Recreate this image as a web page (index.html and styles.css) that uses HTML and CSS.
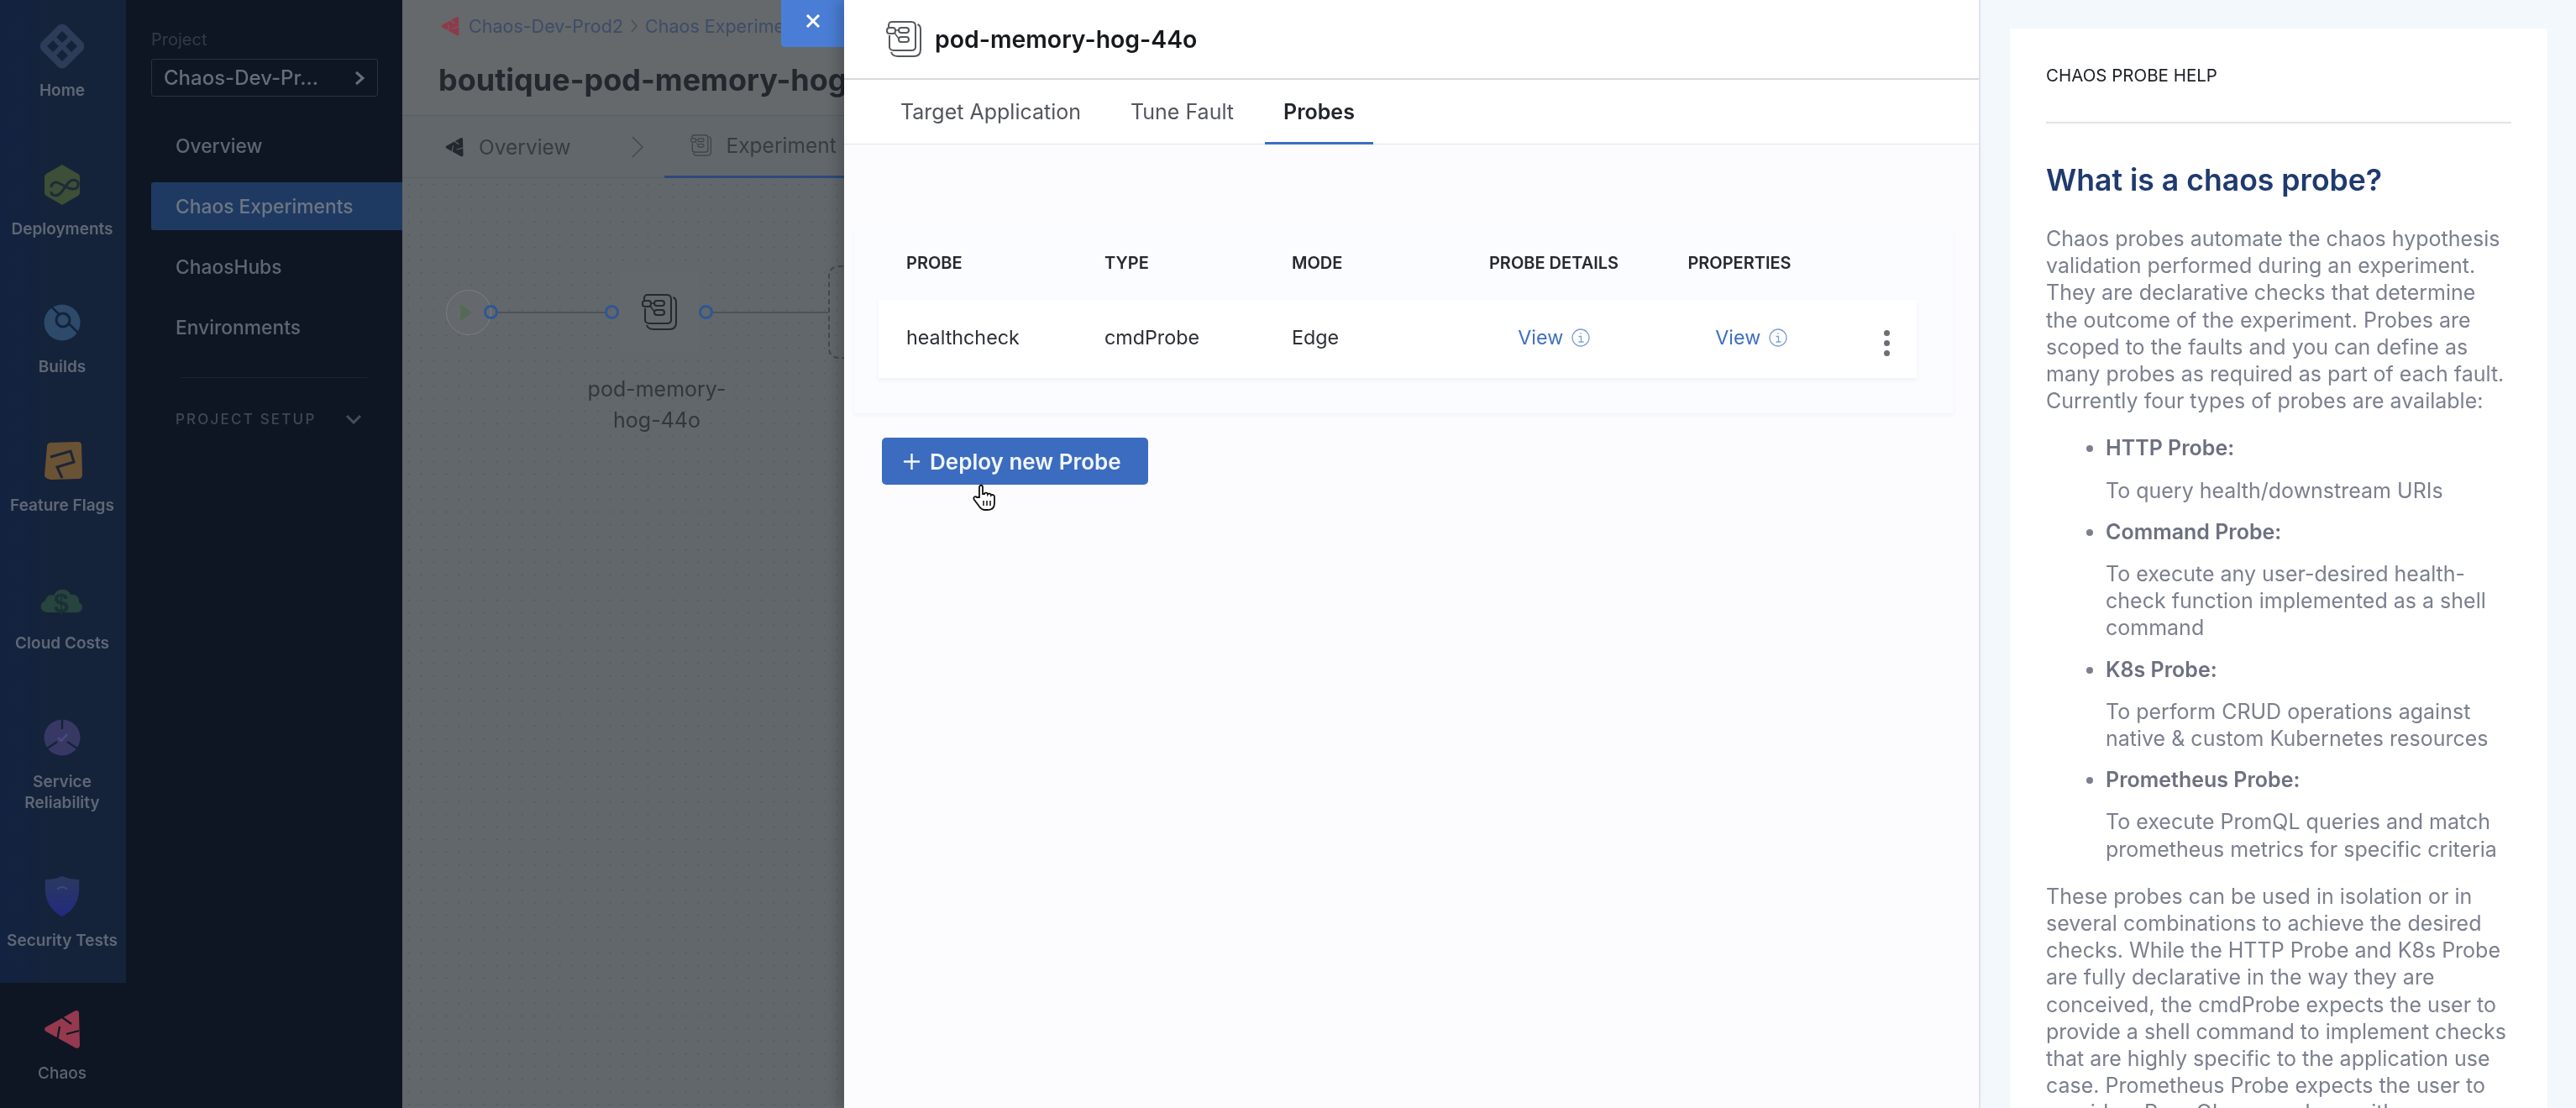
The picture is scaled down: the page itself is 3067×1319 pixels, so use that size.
FILE: index.html
```html
<!DOCTYPE html>
<html lang="en">

<head>
  <meta charset="UTF-8">
  <title>pod-memory-hog-44o</title>
  <link rel="stylesheet" href="styles.css">
</head>

<body>
  <svg class="defs" width="0" height="0">
    <symbol id="step" viewBox="0 0 42 43">
      <path d="M3 7V5c0-2.500 2-4 4-4h23c3 0 5 2 5 5v25c0 3-2 4-5 4H9c-3 0-5-2-5-4V17" fill="none" stroke="currentColor" stroke-width="2" />
      <path d="M37.500 4c2.500 1 3.500 3 3.500 6v24c0 5-3 8-8 8H14c-4 0-7-2-8-5" fill="none" stroke="currentColor" stroke-width="2" />
      <rect x="1" y="8" width="10" height="7" rx="3" fill="none" stroke="currentColor" stroke-width="2" />
      <rect x="15" y="8" width="12" height="6" rx="3" fill="none" stroke="currentColor" stroke-width="2" />
      <rect x="15" y="19" width="12" height="6" rx="3" fill="none" stroke="currentColor" stroke-width="2" />
      <path d="M11 11h4M10 14l5 7" fill="none" stroke="currentColor" stroke-width="1.500" />
    </symbol>
    <symbol id="chaos" viewBox="0 0 44 46">
      <path d="M37 1.500c3-1.500 5 0 5 2.500l1 38c0 3-2 4.500-5 3.500L3 26c-2.500-1.500-2.500-4 0-5.500z" fill="currentColor" />
      <path d="M22 9l11 8M19 20l-3 17M27 29l15-4" fill="none" stroke="var(--crack)" stroke-width="2.200" />
    </symbol>
  </svg>

  <nav class="nav">
    <div class="nav-list">
      <a class="nav-item">
        <svg class="nav-icon" viewBox="0 0 54 54">
          <path d="M22 2.500c3-2.500 7-2.500 10 0l19 19c3 3 3 8 0 11L32 51.500c-3 2.500-7 2.500-10 0L3 32.500c-3-3-3-8 0-11z" fill="#2c3c59" />
          <path d="M27 9l7 7-7 7-7-7zM38 20l7 7-7 7-7-7zM16 20l7 7-7 7-7-7zM27 31l7 7-7 7-7-7z" fill="#14233a" />
        </svg>
        <span>Home</span>
      </a>
      <a class="nav-item">
        <svg class="nav-icon" viewBox="0 0 54 54">
          <path d="M27 3l19 11c1 1 2 2 2 3v20c0 1-1 2-2 3L27 51 8 40c-1-1-2-2-2-3V17c0-1 1-2 2-3z" fill="#3d4f37" />
          <path d="M14 35c0 6 8 6 12 1l8-11c5-6 13-4 12 2 0 6-8 6-13 3l-10-5c-5-3-9 1-9 5" fill="none" stroke="#1c2c38" stroke-width="3" />
        </svg>
        <span>Deployments</span>
      </a>
      <a class="nav-item">
        <svg class="nav-icon" viewBox="0 0 54 54">
          <circle cx="27" cy="27" r="21.500" fill="#2d4a6b" />
          <path d="M14 8l34 33" stroke="#14233a" stroke-width="2.500" />
          <circle cx="28" cy="24" r="8" fill="#2d4a6b" stroke="#14233a" stroke-width="3" />
        </svg>
        <span>Builds</span>
      </a>
      <a class="nav-item">
        <svg class="nav-icon" viewBox="0 0 54 54">
          <path d="M10 5l36-1c3 0 4 2 4 4l1 35c0 3-2 5-5 5l-31 1c-3 0-9-2-9-5l3-35c0-2 2-4 4-4z" fill="#6a5234" />
          <path d="M13 22l24-7 4 13-20 6 6 13" fill="none" stroke="#1d2634" stroke-width="3" />
        </svg>
        <span>Feature Flags</span>
      </a>
      <a class="nav-item">
        <svg class="nav-icon" viewBox="0 0 54 54">
          <path d="M10 43C0 43-1 32 7 29c1-6 6-8 10-6 3-9 17-10 20-1 7-1 11 4 10 9 6 3 5 12-3 12z" fill="#27443f" />
          <text class="dollar" x="26" y="43">$</text>
        </svg>
        <span>Cloud Costs</span>
      </a>
      <a class="nav-item">
        <svg class="nav-icon" viewBox="0 0 54 54">
          <circle cx="27" cy="27" r="21.500" fill="#383865" />
          <path d="M27 4v13M9 40l12-8M45 40l-12-8" stroke="#14233a" stroke-width="2.500" />
          <path d="M22 27l4 4 7-8" fill="none" stroke="#4b4a80" stroke-width="2.500" />
        </svg>
        <span>Service<br>Reliability</span>
      </a>
      <a class="nav-item">
        <svg class="nav-icon" viewBox="0 0 54 54">
          <defs>
            <linearGradient id="shield" x1="0" y1="0" x2="0" y2="1">
              <stop offset="0" stop-color="#293a5e" />
              <stop offset="1" stop-color="#222a80" />
            </linearGradient>
          </defs>
          <path d="M27 3c7 3 13 4 20 4 1 18 0 33-20 44C7 40 6 25 7 7c7 0 13-1 20-4z" fill="url(#shield)" />
          <path d="M21 19c3-4 9-4 12 0" fill="none" stroke="#3a4a70" stroke-width="2" />
        </svg>
        <span>Security Tests</span>
      </a>
    </div>
    <a class="nav-item nav-chaos">
      <svg class="nav-icon chaos-logo">
        <use href="#chaos" />
      </svg>
      <span>Chaos</span>
    </a>
  </nav>

  <aside class="subnav">
    <div class="project-label">Project</div>
    <div class="project-box">
      <span>Chaos-Dev-Pr...</span>
      <svg class="chev" viewBox="0 0 14 18">
        <path d="M3 2l8 7-8 7" />
      </svg>
    </div>
    <ul class="subnav-list">
      <li>Overview</li>
      <li class="active">Chaos Experiments</li>
      <li>ChaosHubs</li>
      <li>Environments</li>
    </ul>
    <div class="subnav-divider"></div>
    <div class="setup">
      <span>PROJECT SETUP</span>
      <svg class="chev setup-chev" viewBox="0 0 20 12">
        <path d="M2 2l8 8 8-8" />
      </svg>
    </div>
  </aside>

  <main class="main">
    <header class="main-head">
      <div class="crumbs">
        <svg class="crumb-logo">
          <use href="#chaos" />
        </svg>
        <span>Chaos-Dev-Prod2</span>
        <svg class="crumb-sep" viewBox="0 0 10 16">
          <path d="M2 1l6 7-6 7" />
        </svg>
        <span>Chaos Experiments</span>
      </div>
      <h1>boutique-pod-memory-hog</h1>
    </header>
    <div class="main-tabs">
      <div class="main-tab">
        <svg class="tab-logo">
          <use href="#chaos" />
        </svg>
        <span>Overview</span>
      </div>
      <svg class="tab-sep" viewBox="0 0 16 28">
        <path d="M2 2l12 12L2 26" />
      </svg>
      <div class="main-tab current">
        <svg class="tab-step">
          <use href="#step" />
        </svg>
        <span>Experiment</span>
      </div>
    </div>
    <div class="canvas">
      <div class="pipeline">
        <div class="start"><i></i></div>
        <div class="port first"></div>
        <div class="wire"></div>
        <div class="port"></div>
        <div class="node">
          <svg class="node-icon">
            <use href="#step" />
          </svg>
        </div>
        <div class="port"></div>
        <div class="wire long"></div>
        <div class="group"></div>
      </div>
      <div class="node-label">pod-memory-<br>hog-44o</div>
    </div>
    <button class="close-btn">
      <svg viewBox="0 0 18 18">
        <path d="M2 2l14 14M16 2L2 16" />
      </svg>
    </button>
  </main>

  <section class="drawer">
    <div class="drawer-head">
      <svg class="drawer-icon">
        <use href="#step" />
      </svg>
      <h2>pod-memory-hog-44o</h2>
    </div>
    <div class="drawer-tabs">
      <a>Target Application</a>
      <a>Tune Fault</a>
      <a class="on">Probes</a>
    </div>
    <div class="drawer-body">
      <div class="probe-card">
        <div class="probe-row probe-headers">
          <div>PROBE</div>
          <div>TYPE</div>
          <div>MODE</div>
          <div class="center">PROBE DETAILS</div>
          <div class="center">PROPERTIES</div>
          <div></div>
        </div>
        <div class="probe-row probe-item">
          <div>healthcheck</div>
          <div>cmdProbe</div>
          <div>Edge</div>
          <div class="center"><a class="view">View <svg class="info" viewBox="0 0 22 22">
                <circle cx="11" cy="11" r="10" />
                <path d="M8.500 9.500H11.500V16M8.500 16h6M11 5v1.500" />
              </svg></a></div>
          <div class="center"><a class="view view-props">View <svg class="info" viewBox="0 0 22 22">
                <circle cx="11" cy="11" r="10" />
                <path d="M8.500 9.500H11.500V16M8.500 16h6M11 5v1.500" />
              </svg></a></div>
          <div class="dots"><i></i><i></i><i></i></div>
        </div>
      </div>
      <div class="deploy-wrap">
        <button class="deploy-btn">
          <svg viewBox="0 0 22 22">
            <path d="M11 1v20M1 11h20" />
          </svg>
          Deploy new Probe
        </button>
        <!-- mouse pointer from the recording -->
        <svg class="pointer" viewBox="0 0 28 32">
          <path d="M8 16V4c0-3 4-3 4 0v8l2 0c0-2 4-2 4 0.500c1-1.500 4-1 4 1 1-1 4-.500 4 2V23c0 5-3 8-8 8h-3c-3 0-5-1-7-4l-6-8c-2-3 1-5 3-3z" fill="#fff" stroke="#111" stroke-width="1.800" />
          <path d="M13 20v6M17 20v6M21 20v6" stroke="#111" stroke-width="1.500" />
        </svg>
      </div>
    </div>
  </section>

  <aside class="help">
    <div class="help-card">
      <div class="help-title">CHAOS PROBE HELP</div>
      <h3>What is a chaos probe?</h3>
      <p>Chaos probes automate the chaos hypothesis validation performed during an experiment. They are declarative checks that determine the outcome of the experiment. Probes are scoped to the faults and you can define as many probes as required as part of each fault. Currently four types of probes are available:</p>
      <ul>
        <li><strong>HTTP Probe:</strong>
          <p>To query health/downstream URIs</p>
        </li>
        <li><strong>Command Probe:</strong>
          <p>To execute any user-desired health-check function implemented as a shell command</p>
        </li>
        <li><strong>K8s Probe:</strong>
          <p>To perform CRUD operations against native &amp; custom Kubernetes resources</p>
        </li>
        <li><strong>Prometheus Probe:</strong>
          <p>To execute PromQL queries and match prometheus metrics for specific criteria</p>
        </li>
      </ul>
      <p>These probes can be used in isolation or in several combinations to achieve the desired checks. While the HTTP Probe and K8s Probe are fully declarative in the way they are conceived, the cmdProbe expects the user to provide a shell command to implement checks that are highly specific to the application use case. Prometheus Probe expects the user to provide a PromQL query along with</p>
    </div>
  </aside>
</body>

</html>
```

FILE: styles.css
```css
* {
  padding: 0;
  margin: 0;
  box-sizing: border-box;
}

html,
body {
  height: 100%;
  overflow: hidden;
}

body {
  display: flex;
  font-family: Inter, "Noto Sans", sans-serif;
  background-color: #0f1623;
}

ul {
  list-style: none;
}

.defs {
  position: absolute;
}

/* left module nav */
.nav {
  flex: none;
  width: 150px;
  height: 1319px;
  display: flex;
  flex-direction: column;
  background-color: #0f1623;
  filter: blur(0.6px);
}

.nav-list {
  height: 1170px;
  background: linear-gradient(90deg, #122241, #15233a 40%, #15233a);
}

.nav-item {
  display: flex;
  flex-direction: column;
  align-items: center;
  gap: 13px;
  padding: 28px 2px 44.500px 0;
  font-size: 19px;
  font-weight: 600;
  line-height: 25px;
  text-align: center;
  white-space: nowrap;
  color: #5f6775;
}

.nav-icon {
  width: 54px;
  height: 54px;
}

.dollar {
  font-family: "Liberation Sans", sans-serif;
  font-size: 32px;
  text-anchor: middle;
  fill: #1a3034;
}

.nav-chaos {
  padding: 28px 2px 0 0;
  color: #5e6674;
  font-weight: 500;
}

.chaos-logo {
  width: 44px;
  height: 46px;
  margin: 4px 0;
  color: #95394f;
  --crack: #0f1623;
}

/* project nav */
.subnav {
  flex: none;
  width: 329px;
  height: 1319px;
  padding: 35px 0 0 30px;
  background-color: #0f1623;
  color: #5f6673;
  filter: blur(0.6px);
}

.project-label {
  font-size: 20px;
  line-height: 24px;
  color: #333a47;
}

.project-box {
  display: flex;
  align-items: center;
  justify-content: space-between;
  width: 270px;
  height: 45px;
  margin-top: 11px;
  padding: 0 14px;
  border: 1px solid #2a3140;
  border-radius: 3px;
  font-size: 24px;
  font-weight: 500;
  color: #666d7a;
}

.chev {
  flex: none;
  width: 14px;
  height: 18px;
  fill: none;
  stroke: #666d7a;
  stroke-width: 3;
}

.subnav-list {
  margin-top: 30px;
}

.subnav-list li {
  height: 57px;
  margin-bottom: 15px;
  padding-left: 29px;
  font-size: 22.800px;
  font-weight: 500;
  line-height: 57px;
}

.subnav-list .active {
  background-color: #1f3a62;
  border-radius: 3px 0 0 3px;
  color: #6d7684;
}

.subnav-divider {
  width: 222px;
  margin: 31px 0 0 35px;
  border-top: 1px solid #1b2230;
}

.setup {
  display: flex;
  align-items: center;
  justify-content: space-between;
  width: 222px;
  margin: 36px 0 0 29px;
  font-size: 17px;
  font-weight: 500;
  letter-spacing: 2.200px;
  line-height: 26px;
  color: #3f4756;
}

.setup-chev {
  width: 20px;
  height: 12px;
  stroke: #454d5c;
}

/* dimmed experiment page */
.main {
  flex: none;
  position: relative;
  width: 526px;
  height: 1319px;
  overflow: hidden;
  background-color: #62676b;
  filter: blur(0.6px);
}

.main-head {
  height: 138px;
  padding: 16px 0 0 43px;
  border-bottom: 1px solid #585d61;
  background-color: #65696b;
}

.crumbs {
  display: flex;
  align-items: center;
  height: 30px;
  font-size: 21.500px;
  white-space: nowrap;
  color: #3d4c68;
}

.crumb-logo {
  width: 22px;
  height: 30px;
  margin: 0 11px 0 3px;
  color: #8f3a4c;
  --crack: #65696b;
}

.crumb-sep {
  width: 10px;
  height: 16px;
  margin: 0 8px;
  fill: none;
  stroke: #4a4f56;
  stroke-width: 1.500;
}

h1 {
  margin-top: 27px;
  font-size: 36px;
  font-weight: 700;
  line-height: 44px;
  white-space: nowrap;
  color: #23272e;
}

.main-tabs {
  display: flex;
  align-items: center;
  height: 74px;
  padding-left: 51px;
  border-bottom: 1px solid #585d61;
  font-size: 24.500px;
  white-space: nowrap;
  color: #373c43;
}

.main-tab {
  display: flex;
  align-items: center;
  gap: 18px;
  height: 74px;
}

.main-tab.current {
  flex: none;
  width: 240px;
  padding-left: 31px;
  border-bottom: 3px solid #2b4a7c;
}

.tab-logo {
  width: 22px;
  height: 30px;
  color: #23272e;
  --crack: #62676b;
}

.tab-step {
  width: 25px;
  height: 28px;
  color: #3c4148;
}

.tab-sep {
  flex: none;
  width: 16px;
  height: 28px;
  margin: 0 0 0 71px;
  margin-right: 24px;
  fill: none;
  stroke: #45494f;
  stroke-width: 1.500;
}

.canvas {
  height: 1107px;
  padding: 104px 0 0 53px;
  background-image: radial-gradient(#595e62 1px, transparent 1.400px);
  background-size: 15px 15px;
}

.pipeline {
  display: flex;
  align-items: center;
  height: 111px;
}

.start {
  flex: none;
  display: flex;
  align-items: center;
  justify-content: center;
  width: 54px;
  height: 54px;
  margin-left: -1px;
  border: 1px solid #7b7f85;
  border-radius: 50%;
  background-color: #65696d;
}

.start i {
  margin-right: 6px;
  border-left: 14px solid #546a55;
  border-top: 10px solid transparent;
  border-bottom: 10px solid transparent;
}

.port {
  flex: none;
  width: 17px;
  height: 17px;
  border: 3px solid #2f5694;
  border-radius: 50%;
}

.port.first {
  margin-left: -9px;
}

.wire {
  flex: none;
  width: 127px;
  border-top: 2px solid #4d5256;
}

.wire.long {
  width: 137px;
}

.node {
  flex: none;
  display: flex;
  align-items: center;
  justify-content: center;
  width: 95px;
  height: 96px;
  background-color: #63686c;
}

.node-icon {
  width: 42px;
  height: 43px;
  color: #25292f;
}

.group {
  flex: none;
  width: 120px;
  height: 111px;
  border: 2px dashed #44494d;
  border-radius: 12px;
}

.node-label {
  width: 240px;
  margin: 18px 0 0 130px;
  font-size: 25px;
  line-height: 37px;
  text-align: center;
  color: #33373d;
}

.close-btn {
  position: absolute;
  top: 0;
  right: 0;
  display: flex;
  align-items: center;
  justify-content: center;
  width: 75px;
  height: 56px;
  padding-bottom: 6px;
  border: none;
  border-radius: 0 0 0 4px;
  background-color: #4a7ed6;
}

.close-btn svg {
  width: 18px;
  height: 18px;
  fill: none;
  stroke: #fff;
  stroke-width: 3;
}

/* fault drawer */
.drawer {
  flex: none;
  width: 1351px;
  height: 1319px;
  background-color: #fcfcff;
  box-shadow: -8px 0 14px rgba(0, 0, 0, 0.18);
  z-index: 1;
  filter: blur(0.4px);
}

.drawer-head {
  display: flex;
  align-items: center;
  gap: 16px;
  height: 95px;
  padding-left: 50px;
  border-bottom: 2px solid #d8d9dc;
  background-color: #fff;
}

.drawer-icon {
  width: 42px;
  height: 43px;
  color: #55585e;
}

h2 {
  font-size: 28.400px;
  font-weight: 600;
  color: #17191d;
}

.drawer-tabs {
  display: flex;
  gap: 15px;
  height: 77px;
  padding-left: 45px;
  border-bottom: 1px solid #e3e4e8;
  background-color: #fff;
  font-size: 25px;
  color: #53565c;
}

.drawer-tabs a {
  height: 77px;
  padding: 0 22px;
  line-height: 76px;
}

.drawer-tabs .on {
  border-bottom: 3px solid #3b6fc4;
  font-weight: 600;
  color: #22252a;
}

.drawer-body {
  padding: 100px 0 0 12px;
}

.probe-card {
  width: 1309px;
  padding: 25px 44px 42px 29px;
  background-color: #fbfcff;
  box-shadow: 0 3px 4px rgba(40, 50, 90, 0.04);
}

.probe-row {
  display: grid;
  grid-template-columns: 236px 223px 192px 240px 202px 1fr;
  padding-left: 33px;
}

.probe-headers {
  height: 60px;
  font-size: 20px;
  font-weight: 600;
  line-height: 32px;
  color: #26292e;
}

.probe-item {
  align-items: center;
  height: 93px;
  padding-bottom: 5px;
  background-color: #fff;
  box-shadow: 0 3px 5px rgba(40, 50, 90, 0.05);
  font-size: 23.300px;
  color: #2c2f35;
}

.center {
  text-align: center;
}

.view {
  color: #3f70bf;
}

.view-props {
  margin-left: 28px;
}

.info {
  width: 22px;
  height: 22px;
  margin-left: 3px;
  vertical-align: -3px;
  fill: none;
  stroke: #7e9fd4;
  stroke-width: 1.300;
}

.dots {
  display: flex;
  flex-direction: column;
  gap: 5px;
  padding: 14px 0 0 71px;
}

.dots i {
  width: 7px;
  height: 7px;
  border-radius: 50%;
  background-color: #6b6e74;
}

.deploy-wrap {
  position: relative;
  width: 317px;
  margin: 29px 0 0 33px;
}

.deploy-btn {
  display: flex;
  align-items: center;
  gap: 11px;
  width: 317px;
  height: 56px;
  padding-left: 25px;
  border: none;
  border-radius: 5px;
  background-color: #3b6cc0;
  font-family: inherit;
  font-size: 26px;
  font-weight: 600;
  color: #f2f6fd;
}

.deploy-btn svg {
  width: 21px;
  height: 21px;
  fill: none;
  stroke: #f2f6fd;
  stroke-width: 2.500;
}

.pointer {
  position: absolute;
  left: 108px;
  top: 55px;
  width: 28px;
  height: 32px;
}

/* help panel */
.help {
  flex: none;
  width: 711px;
  height: 1319px;
  padding: 34px 34px 0 35px;
  overflow: hidden;
  border-left: 2px solid #e2e8f2;
  background-color: #f3f8fc;
  filter: blur(0.4px);
}

.help-card {
  height: 1300px;
  padding: 43px 43px 0;
  background-color: #fff;
  font-size: 25px;
  line-height: 32.200px;
  color: #7b7f8e;
}

.help-title {
  height: 70px;
  border-bottom: 2px solid #e2e3e7;
  font-size: 20.500px;
  line-height: 26px;
  color: #1c1f24;
}

h3 {
  margin-top: 46px;
  font-size: 35.600px;
  font-weight: 600;
  line-height: 44px;
  color: #1f3a6e;
}

.help-card > p {
  margin-top: 31px;
}

.help-card ul {
  margin-top: 24px;
  padding-left: 71px;
  list-style: disc;
}

.help-card li {
  margin-top: 17px;
}

.help-card li p {
  margin-top: 18px;
}

.help-card strong {
  font-weight: 600;
  color: #6c7080;
}

.help-card ul + p {
  margin-top: 24px;
}
```
